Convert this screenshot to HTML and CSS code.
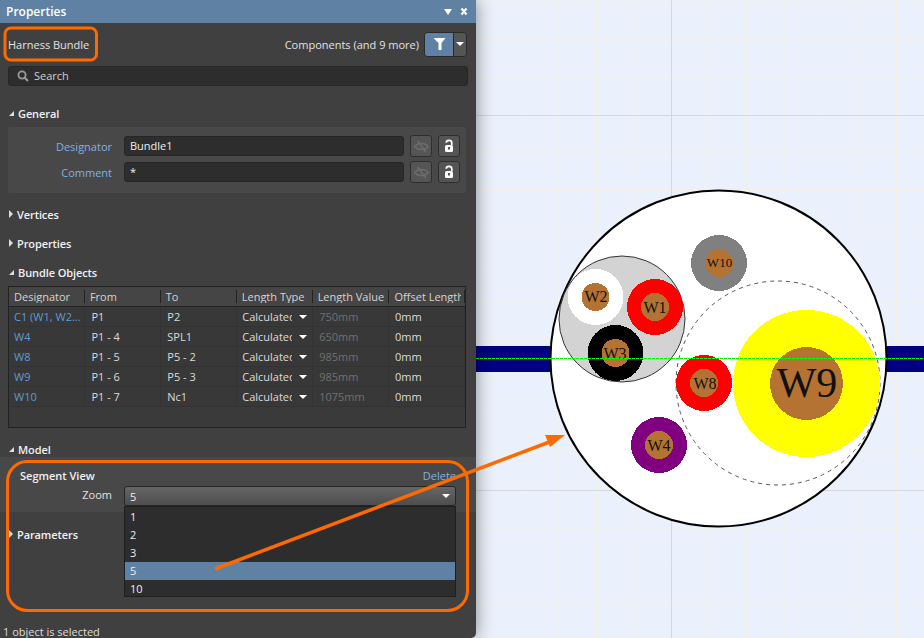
FILE: index.html
```html
<!DOCTYPE html>
<html lang="en">
<head>
<meta charset="UTF-8">
<title>Harness Bundle Properties</title>
<link rel="stylesheet" href="styles.css">
</head>
<body>

<div class="panel">
  <div class="titlebar">
    <span class="title">Properties</span>
    <svg class="title-icons" width="26" height="10" viewBox="0 0 26 10">
      <path d="M1 2h8L5 8z" fill="#fff"/>
      <path d="M18.500 1.500l5 6M23.500 1.500l-5 6" stroke="#fff" stroke-width="2"/>
    </svg>
  </div>

  <div class="objbar">
    <span>Harness Bundle</span>
    <div class="filter">
      <span>Components (and 9 more)</span>
      <div class="filter-btn">
        <span class="filter-main">
          <svg width="13" height="12" viewBox="0 0 13 12"><path d="M0 0h12L8 5v7H5V5z" transform="translate(.5 0)" fill="#fff"/></svg>
        </span>
        <span class="filter-drop"><i class="arrow-down"></i></span>
      </div>
    </div>
  </div>

  <div class="search">
    <svg width="12" height="12" viewBox="0 0 12 12"><circle cx="5" cy="5" r="3.600" fill="none" stroke="#999" stroke-width="1.800"/><path d="M7.500 7.500L11 11" stroke="#999" stroke-width="2.200"/></svg>
    <span>Search</span>
  </div>

  <div class="sect-head first"><i class="tri-open"></i>General</div>
  <div class="group">
    <div class="field">
      <label>Designator</label>
      <div class="input">Bundle1</div>
      <span class="icon-btn"><svg width="15" height="15" viewBox="0 0 15 15"><path d="M1 7.500C3.500 3.500 11.500 3.500 14 7.500C11.500 11.500 3.500 11.500 1 7.500z" fill="none" stroke="#6d6d6d" stroke-width="1.500"/><path d="M3.500 2l8.500 11" stroke="#6d6d6d" stroke-width="1.500"/></svg></span>
      <span class="icon-btn"><svg width="10" height="14" viewBox="0 0 10 14"><path d="M2.200 3.800a2.800 2.500 0 0 1 5.600 0V6" fill="none" stroke="#fff" stroke-width="1.700"/><rect x="1" y="6" width="8" height="7" rx="1.500" fill="#fff"/><rect x="4" y="8" width="2" height="2.500" fill="#555"/></svg></span>
    </div>
    <div class="field">
      <label>Comment</label>
      <div class="input">*</div>
      <span class="icon-btn"><svg width="15" height="15" viewBox="0 0 15 15"><path d="M1 7.500C3.500 3.500 11.500 3.500 14 7.500C11.500 11.500 3.500 11.500 1 7.500z" fill="none" stroke="#6d6d6d" stroke-width="1.500"/><path d="M3.500 2l8.500 11" stroke="#6d6d6d" stroke-width="1.500"/></svg></span>
      <span class="icon-btn"><svg width="10" height="14" viewBox="0 0 10 14"><path d="M2.200 3.800a2.800 2.500 0 0 1 5.600 0V6" fill="none" stroke="#fff" stroke-width="1.700"/><rect x="1" y="6" width="8" height="7" rx="1.500" fill="#fff"/><rect x="4" y="8" width="2" height="2.500" fill="#555"/></svg></span>
    </div>
  </div>

  <div class="sect-head"><i class="tri-closed"></i>Vertices</div>
  <div class="sect-head"><i class="tri-closed"></i>Properties</div>
  <div class="sect-head"><i class="tri-open"></i>Bundle Objects</div>

  <div class="objects">
    <table>
      <thead>
        <tr><th><span>Designator</span></th><th><span>From</span></th><th><span>To</span></th><th><span>Length Type</span></th><th><span>Length Value</span></th><th><span>Offset Length</span></th></tr>
      </thead>
      <tbody>
        <tr><td class="link">C1 (W1, W2...</td><td>P1</td><td>P2</td><td class="type"><span>Calculated</span><i class="arrow-down"></i></td><td class="dim">750mm</td><td>0mm</td></tr>
        <tr><td class="link">W4</td><td>P1 - 4</td><td>SPL1</td><td class="type"><span>Calculated</span><i class="arrow-down"></i></td><td class="dim">650mm</td><td>0mm</td></tr>
        <tr><td class="link">W8</td><td>P1 - 5</td><td>P5 - 2</td><td class="type"><span>Calculated</span><i class="arrow-down"></i></td><td class="dim">985mm</td><td>0mm</td></tr>
        <tr><td class="link">W9</td><td>P1 - 6</td><td>P5 - 3</td><td class="type"><span>Calculated</span><i class="arrow-down"></i></td><td class="dim">985mm</td><td>0mm</td></tr>
        <tr><td class="link">W10</td><td>P1 - 7</td><td>Nc1</td><td class="type"><span>Calculated</span><i class="arrow-down"></i></td><td class="dim">1075mm</td><td>0mm</td></tr>
      </tbody>
    </table>
  </div>

  <div class="sect-head"><i class="tri-open"></i>Model</div>
  <div class="segment">
    <div class="segment-top">
      <b>Segment View</b>
      <a class="delete">Delete</a>
    </div>
    <div class="zoom-row">
      <label>Zoom</label>
      <div class="select"><span>5</span><i class="arrow-down"></i></div>
      <ul class="options">
        <li>1</li>
        <li>2</li>
        <li>3</li>
        <li class="picked">5</li>
        <li>10</li>
      </ul>
    </div>
  </div>

  <div class="sect-head params"><i class="tri-closed"></i>Parameters</div>

  <div class="status">1 object is selected</div>
</div>

<div class="canvas">
  <svg class="drawing" width="448" height="638" viewBox="476 0 448 638">
    <rect x="476" y="346" width="448" height="26" fill="#000080"/>
    <circle cx="718.500" cy="358.500" r="168" fill="#fff" stroke="#000" stroke-width="2"/>
    <circle cx="778" cy="383" r="102" fill="none" stroke="#555" stroke-dasharray="4 4"/>
    <circle cx="622" cy="319" r="63" fill="#d3d3d3" stroke="#333"/>

    <g shape-rendering="crispEdges">
      <circle cx="595.500" cy="297" r="28" fill="#fff"/>
      <circle cx="595.500" cy="297" r="14" fill="#b57333"/>
      <circle cx="655" cy="307" r="28" fill="#f00"/>
      <circle cx="655" cy="307" r="14" fill="#b57333"/>
      <circle cx="615.500" cy="353" r="28" fill="#000"/>
      <circle cx="615.500" cy="353" r="14" fill="#b57333"/>
      <circle cx="719" cy="263" r="28" fill="#808080"/>
      <circle cx="719" cy="263" r="14" fill="#b57333"/>
      <circle cx="704" cy="383" r="28" fill="#f00"/>
      <circle cx="704" cy="383" r="14" fill="#b57333"/>
      <circle cx="806.500" cy="383.500" r="73.500" fill="#ff0"/>
      <circle cx="806.500" cy="383.500" r="36.500" fill="#b57333"/>
      <circle cx="659" cy="445" r="28" fill="#800080"/>
      <circle cx="659" cy="445" r="14" fill="#b57333"/>
    </g>

    <g class="wire-label">
      <text x="596" y="302">W2</text>
      <text x="655" y="313">W1</text>
      <text x="615" y="359">W3</text>
      <text x="719.500" y="267" class="small">W10</text>
      <text x="705" y="389">W8</text>
      <text x="659" y="451">W4</text>
      <text x="807" y="397" class="big">W9</text>
    </g>

    <line x1="476" y1="358.500" x2="924" y2="358.500" stroke="#0f0" stroke-dasharray="3 1"/>
  </svg>
</div>

<!-- orange callouts sit over everything -->
<svg class="callouts" width="924" height="638" viewBox="0 0 924 638">
  <rect x="5" y="28" width="91.500" height="32" rx="6" fill="none" stroke="#ff6a00" stroke-width="3"/>
  <rect x="7.500" y="461.500" width="460" height="149" rx="20" fill="none" stroke="#ff6a00" stroke-width="3"/>
  <line x1="215" y1="569" x2="552" y2="441" stroke="#ff6a00" stroke-width="3.500"/>
  <path d="M565 435L550 447L545 435z" fill="#ff6a00"/>
</svg>

</body>
</html>
```

FILE: styles.css
```css
* {
  box-sizing: border-box;
}

body {
  margin: 0;
  width: 924px;
  height: 638px;
  display: flex;
  overflow: hidden;
  position: relative;
  font-family: "Open Sans", Arial, sans-serif;
  font-size: 11px;
  color: #e2e2e2;
  background-color: #eaf1fc;
}

.panel {
  width: 476px;
  height: 638px;
  flex-shrink: 0;
  display: flex;
  flex-direction: column;
  position: relative;
  z-index: 1;
  background-color: #404040;
  border-bottom-right-radius: 5px;
  box-shadow: 0 0 18px rgba(0, 0, 0, 0.45);
}

.titlebar {
  height: 23px;
  padding: 0 7px 0 6px;
  display: flex;
  justify-content: space-between;
  align-items: center;
  background-color: #5f82a4;
}

.title {
  font-size: 12px;
  font-weight: 600;
  color: #fff;
}

.objbar {
  height: 43px;
  padding: 9px 9px 10px 8px;
  display: flex;
  justify-content: space-between;
  align-items: center;
}

.filter {
  display: flex;
  align-items: center;
  gap: 5px;
}

.filter-btn {
  width: 43px;
  height: 25px;
  display: flex;
  border: 1px solid #2a2a2a;
  border-radius: 4px;
  overflow: hidden;
}

.filter-main {
  width: 29px;
  display: flex;
  justify-content: center;
  align-items: center;
  background-color: #5f82a4;
  border-right: 1px solid #2a2a2a;
}

.filter-drop {
  flex: 1;
  display: flex;
  justify-content: center;
  align-items: center;
  background-color: #555;
}

.arrow-down {
  display: inline-block;
  width: 0;
  height: 0;
  border-left: 4px solid transparent;
  border-right: 4px solid transparent;
  border-top: 4px solid #fff;
}

.search {
  height: 20px;
  margin: 0 8px;
  padding: 0 0 1px 8px;
  display: flex;
  align-items: center;
  gap: 5px;
  background-color: #2d2d2d;
  border: 1px solid #262626;
  border-radius: 3px;
  color: #cfcfcf;
}

.sect-head {
  height: 16px;
  margin-top: 13px;
  padding-left: 9px;
  display: flex;
  align-items: center;
  gap: 4px;
  font-weight: 600;
  letter-spacing: -0.1px;
  color: #f0f0f0;
}

.sect-head.first {
  margin-top: 19px;
}

.tri-open {
  width: 0;
  height: 0;
  border-bottom: 5px solid #ddd;
  border-left: 5px solid transparent;
}

.tri-closed {
  width: 0;
  height: 0;
  border-top: 4px solid transparent;
  border-bottom: 4px solid transparent;
  border-left: 4px solid #ddd;
}

.group {
  height: 66px;
  margin: 6px 10px 0 8px;
  padding-top: 8px;
  background-color: #484848;
  border-radius: 2px;
}

.field {
  height: 26px;
  display: flex;
  align-items: flex-start;
  gap: 6px;
}

.field label {
  width: 104px;
  margin-right: 6px;
  padding-top: 4px;
  text-align: right;
  color: #7fb2e5;
}

.input {
  width: 280px;
  height: 20px;
  margin-top: 1px;
  padding-left: 5px;
  line-height: 18px;
  color: #eee;
  background-color: #2d2d2d;
  border: 1px solid #262626;
  border-radius: 3px;
}

.icon-btn {
  width: 22px;
  height: 22px;
  display: flex;
  justify-content: center;
  align-items: center;
  background-color: #555;
  border: 1px solid #2e2e2e;
  border-radius: 3px;
}

.objects {
  width: 458px;
  height: 142px;
  margin: 6px 0 0 8px;
  background-color: #3a3a3a;
  border: 1px solid #222;
}

table {
  width: 456px;
  table-layout: fixed;
  border-collapse: collapse;
}

th {
  height: 19px;
  padding: 0;
  font-weight: 400;
  text-align: left;
  color: #d4d4d4;
  background-color: #454545;
  border-bottom: 1px solid #222;
}

th span {
  display: block;
  height: 13px;
  padding-left: 5px;
  line-height: 13px;
  white-space: nowrap;
  overflow: hidden;
  border-right: 1px solid #222;
}

/* last heading is clipped short of its separator */
th:last-child span {
  width: 75px;
  padding-left: 6px;
  border-right: 3px solid #454545;
  box-shadow: 1px 0 0 #222;
}

td {
  height: 20px;
  padding: 0 0 0 6px;
  white-space: nowrap;
  overflow: hidden;
  background-color: #383838;
  border-right: 1px solid #333;
  border-bottom: 1px solid #333;
  color: #dcdcdc;
}

td.link {
  padding-left: 5px;
  color: #5e9bd6;
}

td.dim {
  color: #707070;
}

td.type {
  padding-left: 5px;
}

td.type span {
  display: inline-block;
  width: 50px;
  overflow: hidden;
  vertical-align: middle;
}

td.type .arrow-down {
  margin-left: 7px;
  vertical-align: middle;
}

.segment {
  height: 55px;
  background-color: #484848;
}

.segment-top {
  height: 26px;
  padding: 11px 20px 0 20px;
  display: flex;
  justify-content: space-between;
  line-height: 16px;
}

.segment-top b {
  font-weight: 600;
  color: #f0f0f0;
}

.delete {
  color: #7fb2e5;
}

.zoom-row {
  display: flex;
  position: relative;
  margin-top: 3px;
}

.zoom-row label {
  width: 112px;
  margin-right: 12px;
  line-height: 18px;
  text-align: right;
  color: #e2e2e2;
}

.select {
  width: 332px;
  height: 20px;
  padding: 0 5px;
  display: flex;
  justify-content: space-between;
  align-items: center;
  color: #eee;
  background: linear-gradient(#666, #4d4d4d);
  border: 1px solid #262626;
  border-radius: 3px;
}

.options {
  position: absolute;
  left: 124px;
  top: 20px;
  width: 332px;
  height: 91px;
  margin: 0;
  padding: 1px 0;
  list-style: none;
  background-color: #2d2d2d;
  border: 1px solid #1e1e1e;
}

.options li {
  height: 18px;
  padding-left: 5px;
  line-height: 18px;
  color: #eee;
}

.options li.picked {
  background-color: #5f82a4;
}

.sect-head.params {
  margin-top: 14px;
}

.status {
  margin-top: auto;
  padding-left: 3px;
  height: 12px;
  line-height: 12px;
  color: #dcdcdc;
}

.canvas {
  flex: 1;
  background-color: #eaf1fc;
  background-image:
    linear-gradient(to right, #d5d7da 1px, transparent 1px),
    linear-gradient(to bottom, #d5d7da 1px, transparent 1px),
    linear-gradient(to right, #f2f2ea 1px, transparent 1px),
    linear-gradient(to bottom, #f2f2ea 1px, transparent 1px);
  background-size: 375px 375px, 375px 375px, 37.5px 37.5px, 37.5px 37.5px;
  background-position: 195px 0, 0 115px, 7.5px 0, 0 2.5px;
}

.drawing {
  display: block;
}

.wire-label text {
  font-family: "Liberation Serif", serif;
  font-size: 16px;
  text-anchor: middle;
  fill: #111;
}

.wire-label text.small {
  font-size: 13px;
}

.wire-label text.big {
  font-size: 42px;
}

.callouts {
  position: absolute;
  left: 0;
  top: 0;
  z-index: 2;
}
```
